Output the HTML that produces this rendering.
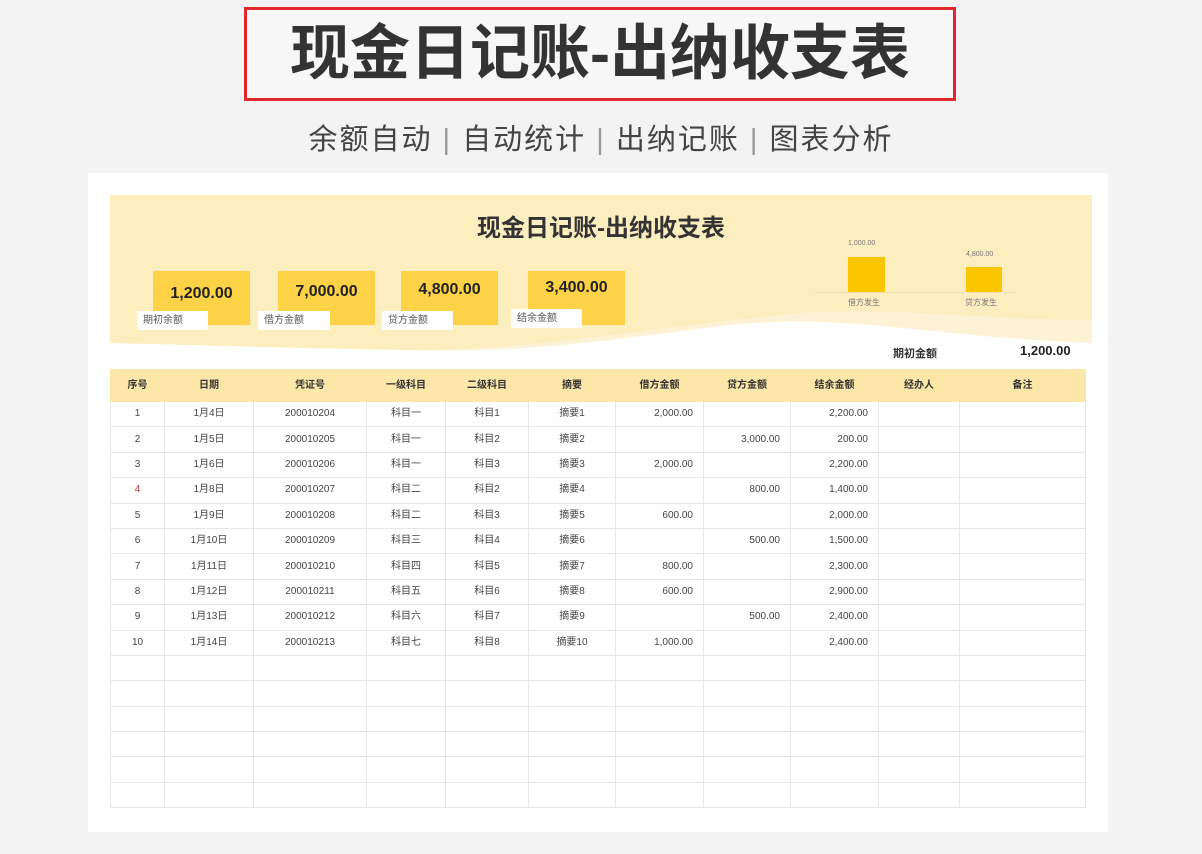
<!DOCTYPE html><html><head><meta charset="utf-8"><style>
*{margin:0;padding:0;box-sizing:border-box}
body{width:1202px;height:854px;background:#f3f3f3;font-family:"Liberation Sans","Noto Sans CJK SC",sans-serif;position:relative;overflow:hidden}
.abs{position:absolute}
.tb{left:244px;top:7px;width:712px;height:94px;border:3px solid #e0282c;background:#f7f7f7;text-align:center;font-size:60px;font-weight:bold;color:#333;line-height:88px;letter-spacing:0px}
.sub{left:0;width:1202px;top:116px;text-align:center;font-size:29px;color:#444;letter-spacing:2px}
.card{left:88px;top:173px;width:1020px;height:659px;background:#fff}
.box{background:#fdd246;width:97px;height:54px;font-weight:bold;font-size:16px;color:#222;text-align:center;padding-top:14px}
.lab{background:#fff;font-size:10px;color:#555;height:19px;line-height:19px;padding-left:6px}
table{border-collapse:collapse;position:absolute;left:110px;top:369px;width:975px;font-size:10px;color:#444;table-layout:fixed}
td,th{border:1px solid #e6e6e6;text-align:center;height:25.4px;font-weight:normal;line-height:12px;vertical-align:middle}
th{background:#fde7a8;height:32px;font-weight:bold;color:#333;border-color:#fde7a8}
td.r{text-align:right;padding-right:10px}
</style></head><body>
<div class="abs tb">现金日记账-出纳收支表</div>
<div class="abs sub">余额自动 <span style="color:#999">|</span> 自动统计 <span style="color:#999">|</span> 出纳记账 <span style="color:#999">|</span> 图表分析</div>
<div class="abs card"></div>
<svg class="abs" style="left:110px;top:195px" width="982" height="160"><path d="M0 0H982V148C800 140 740 118 620 130 C500 145 420 158 300 155 C180 152 80 150 0 148Z" fill="#fdf2d6"/><path d="M0 0H982V125C880 125 780 112 690 118 C560 130 420 156 300 155 C180 153 80 150 0 148Z" fill="#fdeec0"/></svg>
<div class="abs" style="left:110px;top:208px;width:982px;text-align:center;font-size:24px;font-weight:bold;color:#333">现金日记账-出纳收支表</div>
<div class="abs box" style="left:153px;top:271px">1,200.00</div>
<div class="abs box" style="left:278px;top:271px;padding-top:12px">7,000.00</div>
<div class="abs box" style="left:401px;top:271px;padding-top:10px">4,800.00</div>
<div class="abs box" style="left:528px;top:271px;padding-top:8px">3,400.00</div>
<div class="abs lab" style="left:137px;top:311px;width:71px">期初余额</div>
<div class="abs lab" style="left:258px;top:311px;width:72px">借方金额</div>
<div class="abs lab" style="left:382px;top:311px;width:71px">贷方金额</div>
<div class="abs lab" style="left:511px;top:309px;width:71px">结余金额</div>
<div class="abs" style="left:815px;top:292px;width:200px;height:1px;background:#eedfb0"></div>
<div class="abs" style="left:848px;top:257px;width:37px;height:35px;background:#fbc600"></div>
<div class="abs" style="left:966px;top:267px;width:36px;height:25px;background:#fbc600"></div>
<div class="abs" style="left:848px;top:240px;font-size:7px;color:#777">1,000.00</div>
<div class="abs" style="left:966px;top:251px;font-size:7px;color:#777">4,800.00</div>
<div class="abs" style="left:848px;top:297px;font-size:8px;color:#777">借方发生</div>
<div class="abs" style="left:965px;top:297px;font-size:8px;color:#777">贷方发生</div>
<div class="abs" style="left:893px;top:345px;font-size:11px;font-weight:bold;color:#333">期初金额</div>
<div class="abs" style="left:1020px;top:343px;font-size:13px;font-weight:bold;color:#222">1,200.00</div>
<table>
<colgroup><col style="width:54px"><col style="width:89px"><col style="width:113px"><col style="width:79px"><col style="width:83px"><col style="width:87px"><col style="width:88px"><col style="width:87px"><col style="width:88px"><col style="width:81px"><col style="width:126px"></colgroup>
<tr><th>序号</th><th>日期</th><th>凭证号</th><th>一级科目</th><th>二级科目</th><th>摘要</th><th>借方金额</th><th>贷方金额</th><th>结余金额</th><th>经办人</th><th>备注</th></tr>
<tr><td>1</td><td>1月4日</td><td>200010204</td><td>科目一</td><td>科目1</td><td>摘要1</td><td class="r">2,000.00</td><td></td><td class="r">2,200.00</td><td></td><td></td></tr>
<tr><td>2</td><td>1月5日</td><td>200010205</td><td>科目一</td><td>科目2</td><td>摘要2</td><td></td><td class="r">3,000.00</td><td class="r">200.00</td><td></td><td></td></tr>
<tr><td>3</td><td>1月6日</td><td>200010206</td><td>科目一</td><td>科目3</td><td>摘要3</td><td class="r">2,000.00</td><td></td><td class="r">2,200.00</td><td></td><td></td></tr>
<tr><td style="color:#b33">4</td><td>1月8日</td><td>200010207</td><td>科目二</td><td>科目2</td><td>摘要4</td><td></td><td class="r">800.00</td><td class="r">1,400.00</td><td></td><td></td></tr>
<tr><td>5</td><td>1月9日</td><td>200010208</td><td>科目二</td><td>科目3</td><td>摘要5</td><td class="r">600.00</td><td></td><td class="r">2,000.00</td><td></td><td></td></tr>
<tr><td>6</td><td>1月10日</td><td>200010209</td><td>科目三</td><td>科目4</td><td>摘要6</td><td></td><td class="r">500.00</td><td class="r">1,500.00</td><td></td><td></td></tr>
<tr><td>7</td><td>1月11日</td><td>200010210</td><td>科目四</td><td>科目5</td><td>摘要7</td><td class="r">800.00</td><td></td><td class="r">2,300.00</td><td></td><td></td></tr>
<tr><td>8</td><td>1月12日</td><td>200010211</td><td>科目五</td><td>科目6</td><td>摘要8</td><td class="r">600.00</td><td></td><td class="r">2,900.00</td><td></td><td></td></tr>
<tr><td>9</td><td>1月13日</td><td>200010212</td><td>科目六</td><td>科目7</td><td>摘要9</td><td></td><td class="r">500.00</td><td class="r">2,400.00</td><td></td><td></td></tr>
<tr><td>10</td><td>1月14日</td><td>200010213</td><td>科目七</td><td>科目8</td><td>摘要10</td><td class="r">1,000.00</td><td></td><td class="r">2,400.00</td><td></td><td></td></tr>
<tr><td></td><td></td><td></td><td></td><td></td><td></td><td></td><td></td><td></td><td></td><td></td></tr>
<tr><td></td><td></td><td></td><td></td><td></td><td></td><td></td><td></td><td></td><td></td><td></td></tr>
<tr><td></td><td></td><td></td><td></td><td></td><td></td><td></td><td></td><td></td><td></td><td></td></tr>
<tr><td></td><td></td><td></td><td></td><td></td><td></td><td></td><td></td><td></td><td></td><td></td></tr>
<tr><td></td><td></td><td></td><td></td><td></td><td></td><td></td><td></td><td></td><td></td><td></td></tr>
<tr><td></td><td></td><td></td><td></td><td></td><td></td><td></td><td></td><td></td><td></td><td></td></tr>
</table>
</body></html>
